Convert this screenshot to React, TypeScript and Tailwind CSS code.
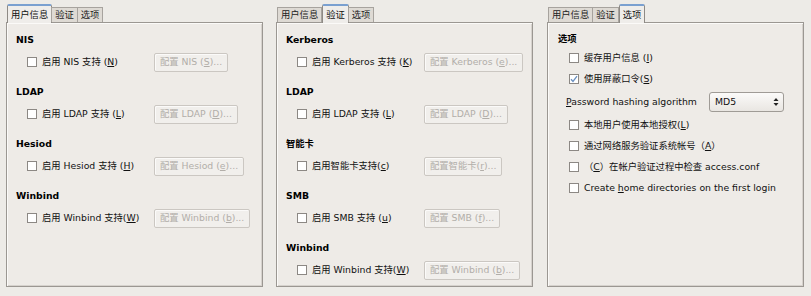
import React from "react";

const FONT = "font-['DejaVu_Sans','Noto_Sans_CJK_SC',sans-serif]";

function U({ children }: { children: React.ReactNode }) {
  return <span className="underline underline-offset-[1px]">{children}</span>;
}

function Tabs({ active }: { active: number }) {
  const names = ["用户信息", "验证", "选项"];
  return (
    <div className="flex items-end h-[18px] pl-[1px] relative z-10">
      {names.map((n, i) =>
        i === active ? (
          <div
            key={n}
            className="h-[19px] -mb-px px-[3px] flex items-center border border-b-0 border-[#8e8a85] border-t-[#7aa0d0] border-t-2 rounded-t-[2px] bg-[#efedea] text-[#111]"
          >
            {n}
          </div>
        ) : (
          <div
            key={n}
            className="h-[15px] px-[3px] flex items-center border border-b-0 border-[#a7a39e] bg-[#dedad4] text-[#222] -ml-px first:ml-0"
          >
            {n}
          </div>
        )
      )}
    </div>
  );
}

function Box({ checked }: { checked?: boolean }) {
  return (
    <span className="w-[10px] h-[10px] border border-[#8c8884] bg-white flex items-center justify-center shrink-0">
      {checked && (
        <svg width="8" height="8" viewBox="0 0 8 8">
          <path d="M1 4.2 L3 6.4 L7 1.2" fill="none" stroke="#6a8fbf" strokeWidth="1.3" />
        </svg>
      )}
    </span>
  );
}

function Btn({ children }: { children: React.ReactNode }) {
  return (
    <div className="h-[19px] px-[5px] flex items-center border border-[#cbc7c2] rounded-[2px] bg-[#f1efec] text-[#b2aea9] shadow-[inset_1px_1px_0_#fbfaf9]">
      {children}
    </div>
  );
}

function Section({
  title,
  label,
  button,
}: {
  title: string;
  label: React.ReactNode;
  button: React.ReactNode;
}) {
  return (
    <div className="flex flex-col">
      <div className="h-[14px] flex items-center font-bold text-black">{title}</div>
      <div className="mt-[5px] h-[20px] flex items-center">
        <div className="w-[138px] pl-[11px] flex items-center gap-[5px] text-[#111]">
          <Box />
          <span>{label}</span>
        </div>
        <Btn>{button}</Btn>
      </div>
    </div>
  );
}

function Panel({ active, children }: { active: number; children: React.ReactNode }) {
  return (
    <div className="w-[257px] flex flex-col">
      <Tabs active={active} />
      <div className="h-[265px] border border-[#9b9792] bg-[#eeebe7] shadow-[inset_1px_1px_0_#fbfaf8,inset_-1px_-1px_0_#d6d2cd]">
        {children}
      </div>
    </div>
  );
}

function CheckRow({ checked, children }: { checked?: boolean; children: React.ReactNode }) {
  return (
    <div className="h-[21px] pl-[21px] flex items-center gap-[5px] text-[#111]">
      <Box checked={checked} />
      <span>{children}</span>
    </div>
  );
}

export default function App() {
  return (
    <div
      className={`w-[811px] h-[296px] bg-[#edebe7] flex pl-[6px] pt-[4px] gap-[13px] text-[9.3px] leading-none ${FONT}`}
    >
      <Panel active={0}>
        <div className="pl-[9px] pt-[10px] flex flex-col gap-[13px]">
          <Section
            title="NIS"
            label={<>启用 NIS 支持 (<U>N</U>)</>}
            button={<>配置 NIS (<U>S</U>)...</>}
          />
          <Section
            title="LDAP"
            label={<>启用 LDAP 支持 (<U>L</U>)</>}
            button={<>配置 LDAP (<U>D</U>)...</>}
          />
          <Section
            title="Hesiod"
            label={<>启用 Hesiod 支持 (<U>H</U>)</>}
            button={<>配置 Hesiod (<U>e</U>)...</>}
          />
          <Section
            title="Winbind"
            label={<>启用 Winbind 支持(<U>W</U>)</>}
            button={<>配置 Winbind (<U>b</U>)...</>}
          />
        </div>
      </Panel>
      <Panel active={1}>
        <div className="pl-[9px] pt-[10px] flex flex-col gap-[13px]">
          <Section
            title="Kerberos"
            label={<>启用 Kerberos 支持 (<U>K</U>)</>}
            button={<>配置 Kerberos (<U>e</U>)...</>}
          />
          <Section
            title="LDAP"
            label={<>启用 LDAP 支持 (<U>L</U>)</>}
            button={<>配置 LDAP (<U>D</U>)...</>}
          />
          <Section
            title="智能卡"
            label={<>启用智能卡支持(<U>c</U>)</>}
            button={<>配置智能卡(<U>r</U>)...</>}
          />
          <Section
            title="SMB"
            label={<>启用 SMB 支持 (<U>u</U>)</>}
            button={<>配置 SMB (<U>f</U>)...</>}
          />
          <Section
            title="Winbind"
            label={<>启用 Winbind 支持(<U>W</U>)</>}
            button={<>配置 Winbind (<U>b</U>)...</>}
          />
        </div>
      </Panel>
      <div className="ml-px">
        <Panel active={2}>
          <div className="pt-[9px] flex flex-col">
            <div className="pl-[10px] h-[14px] flex items-center font-bold text-black">选项</div>
            <div className="mt-px flex flex-col">
              <CheckRow>
                缓存用户信息 (<U>I</U>)
              </CheckRow>
              <CheckRow checked>
                使用屏蔽口令(<U>S</U>)
              </CheckRow>
              <div className="h-[25px] pl-[18px] flex items-center text-[#111]">
                <span className="w-[143px]">
                  <U>P</U>assword hashing algorithm
                </span>
                <div className="w-[75px] h-[20px] flex items-center justify-between pl-[5px] pr-[4px] border border-[#9f9b96] rounded-[3px] bg-gradient-to-b from-[#fbfaf9] to-[#e9e6e2] text-[#111]">
                  <span>MD5</span>
                  <svg width="6" height="10" viewBox="0 0 6 10">
                    <path d="M0.5 4 L3 1 L5.5 4 Z" fill="#222" />
                    <path d="M0.5 6 L3 9 L5.5 6 Z" fill="#222" />
                  </svg>
                </div>
              </div>
              <CheckRow>
                本地用户使用本地授权(<U>L</U>)
              </CheckRow>
              <CheckRow>
                通过网络服务验证系统帐号（<U>A</U>）
              </CheckRow>
              <CheckRow>
                （<U>C</U>）在帐户验证过程中检查 access.conf
              </CheckRow>
              <CheckRow>
                Create <U>h</U>ome directories on the first login
              </CheckRow>
            </div>
          </div>
        </Panel>
      </div>
    </div>
  );
}
